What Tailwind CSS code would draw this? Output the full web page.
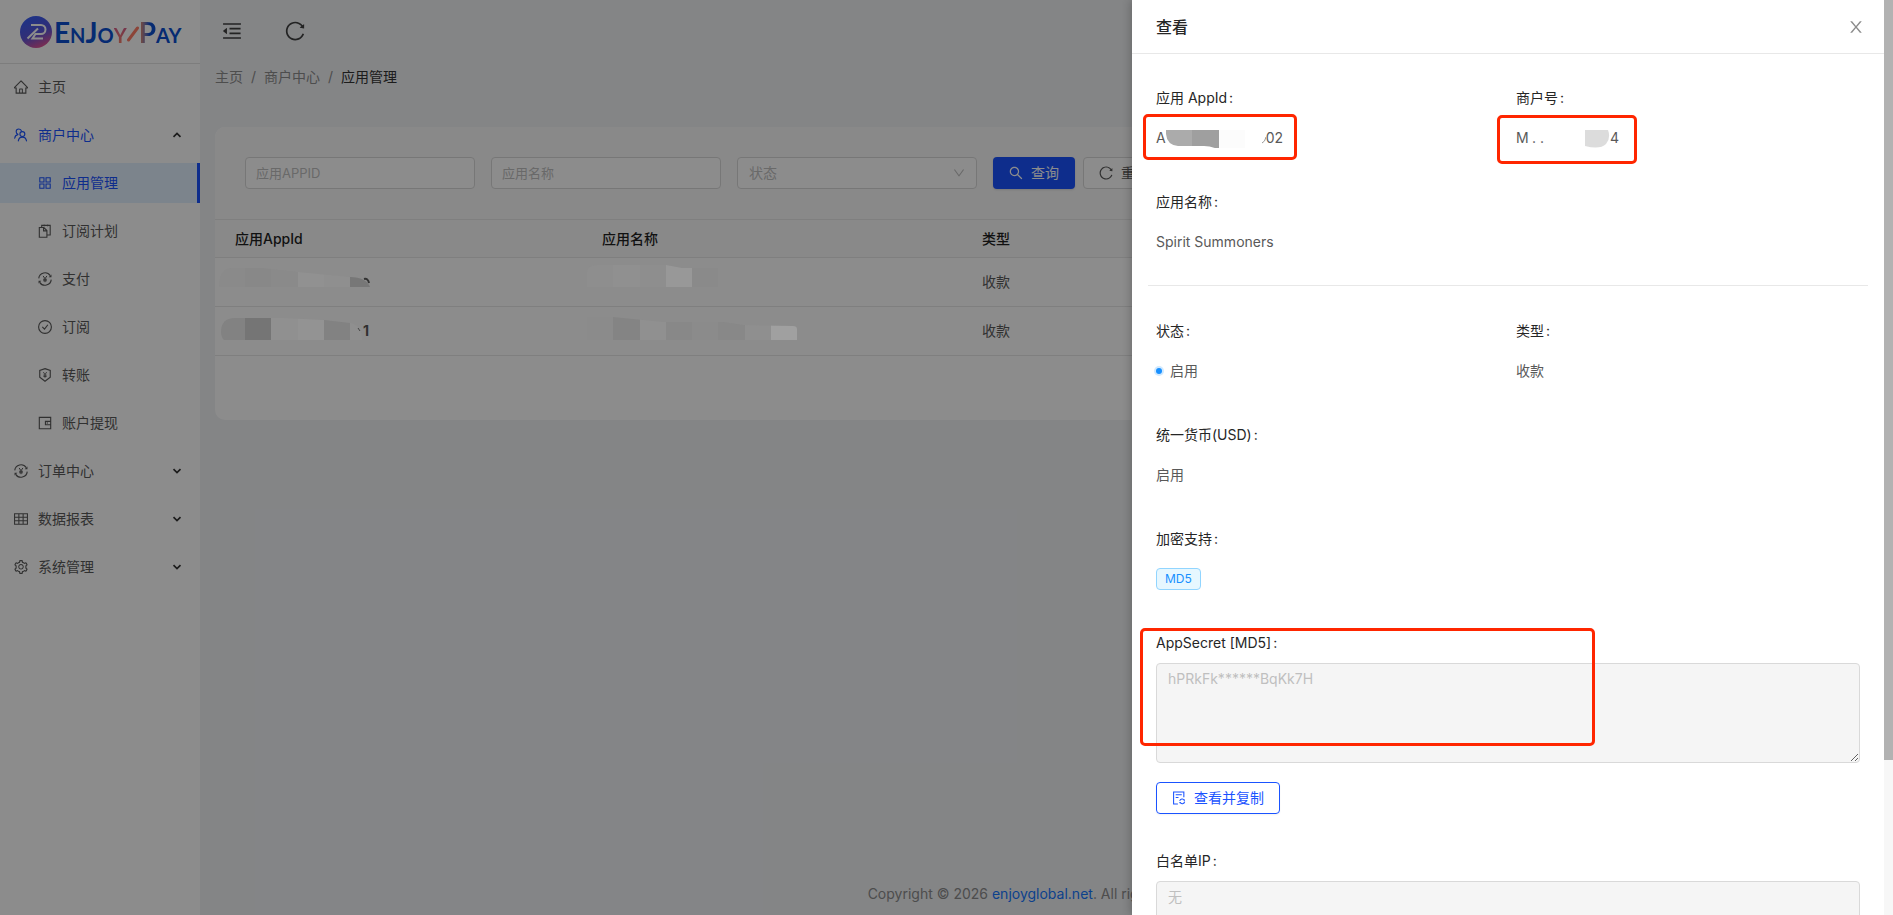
<!DOCTYPE html>
<html lang="zh-CN">
<head>
<meta charset="utf-8">
<title>应用管理</title>
<script src="https://cdn.jsdelivr.net/npm/@tailwindcss/browser@4"></script>
</head>
<body class="relative h-screen overflow-hidden bg-[#f0f2f5] font-['Inter','Noto_Sans_CJK_SC',sans-serif] text-sm text-[#595959]">

<svg class="hidden" aria-hidden="true">
  <symbol id="home" viewBox="64 64 896 896"><path d="M946.5 505L560.1 118.8l-25.9-25.9a31.5 31.5 0 00-44.4 0L77.5 505a63.9 63.9 0 00-18.8 46c.4 35.2 29.7 63.3 64.9 63.3h42.5V940h691.8V614.3h43.4c17.1 0 33.2-6.7 45.3-18.8a63.6 63.6 0 0018.7-45.3c0-17-6.7-33.1-18.8-45.2zM568 868H456V664h112v204zm217.9-325.7V868H632V640c0-22.1-17.9-40-40-40H432c-22.1 0-40 17.9-40 40v228H238.1V542.3h-96l370-369.7 23.1 23.1L882 542.3h-96.1z"/></symbol>
  <symbol id="team" viewBox="64 64 896 896"><g fill="none" stroke="currentColor" stroke-width="72" stroke-linecap="round"><circle cx="600" cy="455" r="158"/><path d="M340 890c20-150 120-245 260-245s240 95 265 245M545 270c-20-85-85-140-170-140-98 0-172 76-172 172 0 80 45 135 115 160M110 720c15-120 80-210 195-235M690 330"/></g></symbol>
  <symbol id="apps" viewBox="64 64 896 896"><path d="M464 144H160c-8.8 0-16 7.2-16 16v304c0 8.8 7.2 16 16 16h304c8.8 0 16-7.2 16-16V160c0-8.8-7.2-16-16-16zm-52 268H212V212h200v200zm452-268H560c-8.8 0-16 7.2-16 16v304c0 8.8 7.2 16 16 16h304c8.8 0 16-7.2 16-16V160c0-8.8-7.2-16-16-16zm-52 268H612V212h200v200zM464 544H160c-8.8 0-16 7.2-16 16v304c0 8.8 7.2 16 16 16h304c8.8 0 16-7.2 16-16V560c0-8.8-7.2-16-16-16zm-52 268H212V612h200v200zm452-268H560c-8.8 0-16 7.2-16 16v304c0 8.8 7.2 16 16 16h304c8.8 0 16-7.2 16-16V560c0-8.8-7.2-16-16-16zm-52 268H612V612h200v200z"/></symbol>
  <symbol id="snippets" viewBox="64 64 896 896"><g fill="none" stroke="currentColor" stroke-width="70"><path d="M148 290h290l196 196v430H148zM420 300v205h205M300 290V150h544v620H650M460 90v120M680 90v120"/></g></symbol>
  <symbol id="yen" viewBox="64 64 896 896"><g fill="none" stroke="currentColor" stroke-width="72"><path d="M112 470A402 402 0 0 1 850 298M912 554A402 402 0 0 1 174 726"/><path d="M390 315l122 180 122-180M512 490v225M395 530h234M395 625h234" stroke-width="64"/></g><path d="M925 225v180H745zM99 799V619h180z"/></symbol>
  <symbol id="check" viewBox="64 64 896 896"><g fill="none" stroke="currentColor" stroke-width="72"><circle cx="512" cy="512" r="410"/><path d="M340 500l140 150 215-280"/></g></symbol>
  <symbol id="shield" viewBox="64 64 896 896"><g fill="none" stroke="currentColor" stroke-width="72"><path d="M512 104l336 110v444L512 914 176 658V214z"/><path d="M405 325l107 155 107-155M512 480v210M410 520h204M410 605h204" stroke-width="56"/></g></symbol>
  <symbol id="wallet" viewBox="64 64 896 896"><g fill="none" stroke="currentColor" stroke-width="72"><path d="M148 148h728v728H148zM876 404H540v216h336"/></g><circle cx="655" cy="512" r="44"/></symbol>
  <symbol id="table" viewBox="64 64 896 896"><path fill="none" stroke="currentColor" stroke-width="68" d="M100 180h824v664H100zM100 400h824M100 622h824M375 180v664M648 180v664"/></symbol>
  <symbol id="gear" viewBox="64 64 896 896"><path d="M924.8 625.7l-65.5-56c3.1-19 4.7-38.4 4.7-57.8s-1.6-38.8-4.7-57.8l65.5-56a32.03 32.03 0 009.3-35.2l-.9-2.6a443.74 443.74 0 00-79.7-137.9l-1.8-2.1a32.12 32.12 0 00-35.1-9.5l-81.3 28.9c-30-24.6-63.5-44-99.7-57.6l-15.7-85a32.05 32.05 0 00-25.8-25.7l-2.7-.5c-52.1-9.4-106.9-9.4-159 0l-2.7.5a32.05 32.05 0 00-25.8 25.7l-15.8 85.4a351.86 351.86 0 00-99 57.4l-81.9-29.1a32 32 0 00-35.1 9.5l-1.8 2.1a446.02 446.02 0 00-79.7 137.9l-.9 2.6c-4.5 12.5-.8 26.5 9.3 35.2l66.3 56.6c-3.1 18.8-4.6 38-4.6 57.1 0 19.2 1.5 38.4 4.6 57.1L99 625.5a32.03 32.03 0 00-9.3 35.2l.9 2.6c18.1 50.4 44.9 96.9 79.7 137.9l1.8 2.1a32.12 32.12 0 0035.1 9.5l81.9-29.1c29.8 24.5 63.1 43.9 99 57.4l15.8 85.4a32.05 32.05 0 0025.8 25.7l2.7.5a449.4 449.4 0 00159 0l2.7-.5a32.05 32.05 0 0025.8-25.7l15.7-85a350 350 0 0099.7-57.6l81.3 28.9a32 32 0 0035.1-9.5l1.8-2.1c34.8-41.1 61.6-87.5 79.7-137.9l.9-2.6c4.5-12.3.8-26.3-9.3-35zM788.3 465.9c2.5 15.1 3.8 30.6 3.8 46.1s-1.3 31-3.8 46.1l-6.6 40.1 74.7 63.9a370.03 370.03 0 01-42.6 73.6L721 702.8l-31.4 25.8c-23.9 19.6-50.5 35-79.3 45.8l-38.1 14.3-17.9 97a377.5 377.5 0 01-85 0l-17.9-97.2-37.8-14.5c-28.5-10.8-55-26.2-78.7-45.7l-31.4-25.9-93.4 33.2c-17-22.9-31.2-47.6-42.6-73.6l75.5-64.5-6.5-40c-2.4-14.9-3.7-30.3-3.7-45.5 0-15.3 1.2-30.6 3.7-45.5l6.5-40-75.5-64.5c11.3-26.1 25.6-50.7 42.6-73.6l93.4 33.2 31.4-25.9c23.7-19.5 50.2-34.9 78.7-45.7l37.9-14.3 17.9-97.2c28.1-3.2 56.8-3.2 85 0l17.9 97 38.1 14.3c28.7 10.8 55.4 26.2 79.3 45.8l31.4 25.8 92.8-32.9c17 22.9 31.2 47.6 42.6 73.6L781.8 426l6.5 39.9zM512 326c-97.2 0-176 78.8-176 176s78.8 176 176 176 176-78.8 176-176-78.8-176-176-176zm79.2 255.2A111.6 111.6 0 01512 614c-29.9 0-58-11.7-79.2-32.8A111.6 111.6 0 01400 502c0-29.9 11.7-58 32.8-79.2C454 401.6 482.1 390 512 390c29.9 0 58 11.6 79.2 32.8A111.6 111.6 0 01624 502c0 29.9-11.7 58-32.8 79.2z"/></symbol>
  <symbol id="caret" viewBox="0 0 10 6"><path d="M1.5 1.2L5 4.6l3.5-3.4" fill="none" stroke="currentColor" stroke-width="1.7"/></symbol>
  <symbol id="fold" viewBox="64 64 896 896"><path d="M408 442h480c4.400 0 8-3.600 8-8v-56c0-4.400-3.600-8-8-8H408c-4.400 0-8 3.600-8 8v56c0 4.400 3.600 8 8 8zm-8 204c0 4.400 3.600 8 8 8h480c4.400 0 8-3.600 8-8v-56c0-4.400-3.600-8-8-8H408c-4.400 0-8 3.600-8 8v56zm504-486H120c-4.400 0-8 3.600-8 8v56c0 4.400 3.600 8 8 8h784c4.400 0 8-3.600 8-8v-56c0-4.400-3.600-8-8-8zm0 632H120c-4.400 0-8 3.600-8 8v56c0 4.400 3.600 8 8 8h784c4.400 0 8-3.600 8-8v-56c0-4.400-3.600-8-8-8zM115.400 518.900L271.700 642c5.800 4.600 14.400.5 14.400-6.900V388.900c0-7.400-8.500-11.500-14.400-6.900L115.400 505.100a8.740 8.740 0 000 13.800z"/></symbol>
  <symbol id="reload" viewBox="64 64 896 896"><path d="M909.1 209.3l-56.4 44.1C775.8 155.1 656.2 92 521.9 92 290 92 102.3 279.5 102 511.5 101.7 743.7 289.8 932 521.9 932c181.3 0 335.8-115 394.6-276.1 1.5-4.2-.7-8.9-4.9-10.3l-56.7-19.5a8 8 0 00-10.1 4.8c-1.800 5-3.800 10-5.900 14.900-17.300 41-42.100 77.800-73.700 109.400A344.770 344.770 0 01655.900 829c-42.300 17.900-87.400 27-133.800 27-46.500 0-91.500-9.100-133.800-27A341.500 341.500 0 01279 755.200a342.160 342.160 0 01-73.700-109.400c-17.900-42.400-27-87.400-27-133.900s9.100-91.500 27-133.900c17.300-41 42.100-77.800 73.700-109.400 31.600-31.600 68.400-56.400 109.300-73.800 42.300-17.900 87.400-27 133.800-27 46.500 0 91.500 9.100 133.800 27a341.500 341.500 0 01109.300 73.800c9.900 9.900 19.200 20.400 27.800 31.400l-60.200 47a8 8 0 003 14.100l175.600 43c5 1.200 9.900-2.600 9.900-7.700l.8-180.900c-.1-6.600-7.800-10.300-13-6.200z"/></symbol>
  <symbol id="search" viewBox="64 64 896 896"><path d="M909.6 854.5L649.9 594.8C690.2 542.7 712 479 712 412c0-80.2-31.3-155.4-87.9-212.1-56.6-56.7-132-87.9-212.1-87.9s-155.5 31.3-212.1 87.9C143.200 256.500 112 331.800 112 412c0 80.100 31.300 155.500 87.900 212.100C256.500 680.800 331.800 712 412 712c67 0 130.600-21.800 182.700-62l259.700 259.600a8.200 8.200 0 0011.600 0l43.600-43.500a8.200 8.200 0 000-11.600zM570.400 570.400C528 612.700 471.800 636 412 636s-116-23.300-158.400-65.600C211.300 528 188 471.800 188 412s23.300-116.100 65.600-158.400C296 211.300 352.200 188 412 188s116.100 23.200 158.400 65.600S636 352.200 636 412s-23.300 116.100-65.600 158.400z"/></symbol>
  <symbol id="down" viewBox="64 64 896 896"><path d="M884 256h-75c-5.100 0-9.900 2.500-12.900 6.600L512 654.200 227.900 262.600c-3-4.100-7.800-6.600-12.900-6.600h-75c-6.500 0-10.300 7.400-6.500 12.700l352.600 486.100c12.800 17.600 39 17.600 51.700 0l352.600-486.100c3.900-5.300.1-12.700-6.400-12.700z"/></symbol>
  <symbol id="close" viewBox="64 64 896 896"><path d="M563.800 512l262.500-312.900c4.400-5.200.7-13.100-6.100-13.100h-79.800c-4.700 0-9.200 2.100-12.300 5.700L511.600 449.800 295.100 191.700c-3-3.600-7.500-5.700-12.300-5.700H203c-6.800 0-10.500 7.900-6.100 13.100L459.400 512 196.900 824.900A7.950 7.950 0 00203 838h79.800c4.700 0 9.200-2.100 12.300-5.700l216.500-258.100 216.500 258.100c3 3.600 7.500 5.700 12.300 5.700h79.800c6.800 0 10.500-7.900 6.100-13.100L563.800 512z"/></symbol>
  <symbol id="filesync" viewBox="64 64 896 896"><g fill="none" stroke="currentColor" stroke-width="68"><path d="M440 896H166V128h656v340M300 306h390M300 476h180"/><path d="M558 700a160 160 0 0 1 300-40M876 740a160 160 0 0 1-300 50"/></g><path d="M890 590v100H790zM540 870V770h100z"/></symbol>
</svg>

<div class="flex h-full">
  <aside class="w-[200px] shrink-0 bg-white">
    <a href="#" class="flex h-16 items-center border-b border-[#e4e4e4] pl-5">
      <svg class="size-8 shrink-0" viewBox="0 0 32 32" aria-hidden="true">
        <defs><linearGradient id="lg" x1="0.3" y1="0" x2="0.7" y2="1"><stop offset="0" stop-color="#365cf5"/><stop offset="0.55" stop-color="#5a55d8"/><stop offset="1" stop-color="#ea5290"/></linearGradient></defs>
        <circle cx="16" cy="16" r="16" fill="url(#lg)"/>
        <path d="M11 9h10a4.500 4.500 0 0 1 0 9H15.500l-3 4.500H23M18 12.500L7.500 22.500" fill="none" stroke="#fff" stroke-width="2"/>
      </svg>
      <span class="ml-0.5 flex items-center font-['Lato'] text-[28px] leading-8 font-bold text-[#0b4fd0] [font-variant-caps:small-caps]"><span>EnJo</span><span class="bg-linear-to-b from-[#c0409a] to-[#ff8a5c] bg-clip-text text-transparent">y</span><svg class="h-5 w-3" viewBox="0 0 12 20" aria-hidden="true"><path d="M1.500 18L10.500 6" fill="none" stroke="#ff7d66" stroke-width="3" stroke-linecap="round"/></svg><span class="bg-linear-to-r from-[#ff8a4c] to-[#0b4fd0] to-60% bg-clip-text text-transparent">P</span><span>ay</span></span>
    </a>
    <nav class="flex flex-col gap-2 pt-[3px]">
      <a href="#" class="flex h-10 items-center gap-2.5 px-3.5"><svg class="size-3.5" fill="currentColor"><use href="#home"/></svg>主页</a>
      <button class="flex h-10 items-center gap-2.5 px-3.5 text-[#1a53ff]"><svg class="size-3.5" fill="currentColor"><use href="#team"/></svg>商户中心<svg class="mr-1 ml-auto h-1.5 w-2.5 rotate-180 text-[#333333]"><use href="#caret"/></svg></button>
      <a href="#" class="flex h-10 items-center gap-2.5 border-r-3 border-[#1a53ff] bg-[#e2f0ff] pl-[38px] text-[#1a53ff]"><svg class="size-3.5" fill="currentColor"><use href="#apps"/></svg>应用管理</a>
      <a href="#" class="flex h-10 items-center gap-2.5 pl-[38px]"><svg class="size-3.5" fill="currentColor"><use href="#snippets"/></svg>订阅计划</a>
      <a href="#" class="flex h-10 items-center gap-2.5 pl-[38px]"><svg class="size-3.5" fill="currentColor"><use href="#yen"/></svg>支付</a>
      <a href="#" class="flex h-10 items-center gap-2.5 pl-[38px]"><svg class="size-3.5" fill="currentColor"><use href="#check"/></svg>订阅</a>
      <a href="#" class="flex h-10 items-center gap-2.5 pl-[38px]"><svg class="size-3.5" fill="currentColor"><use href="#shield"/></svg>转账</a>
      <a href="#" class="flex h-10 items-center gap-2.5 pl-[38px]"><svg class="size-3.5" fill="currentColor"><use href="#wallet"/></svg>账户提现</a>
      <button class="flex h-10 items-center gap-2.5 px-3.5"><svg class="size-3.5" fill="currentColor"><use href="#yen"/></svg>订单中心<svg class="mr-1 ml-auto h-1.5 w-2.5 text-[#333333]"><use href="#caret"/></svg></button>
      <button class="flex h-10 items-center gap-2.5 px-3.5"><svg class="size-3.5" fill="currentColor"><use href="#table"/></svg>数据报表<svg class="mr-1 ml-auto h-1.5 w-2.5 text-[#333333]"><use href="#caret"/></svg></button>
      <button class="flex h-10 items-center gap-2.5 px-3.5"><svg class="size-3.5" fill="currentColor"><use href="#gear"/></svg>系统管理<svg class="mr-1 ml-auto h-1.5 w-2.5 text-[#333333]"><use href="#caret"/></svg></button>
    </nav>
  </aside>

  <div class="flex min-w-0 flex-1 flex-col px-[15px]">
    <header class="flex h-[62px] items-center gap-[43px] pl-[7px] text-[#404040]">
      <button aria-label="收起菜单"><svg class="size-5" fill="currentColor"><use href="#fold"/></svg></button>
      <button aria-label="刷新"><svg class="size-5" fill="currentColor"><use href="#reload"/></svg></button>
    </header>
    <nav class="flex h-[30px] items-center gap-2 text-[#8c8c8c]">
      <a href="#">主页</a><span>/</span><a href="#">商户中心</a><span>/</span><span class="text-[#333333]">应用管理</span>
    </nav>
    <main class="mt-[35px] overflow-hidden rounded-[10px] bg-white pb-16">
      <form class="flex bg-[#fafafa] px-[30px] py-[30px]">
        <input aria-label="应用APPID" placeholder="应用APPID" class="h-8 w-[230px] rounded-[4px] border border-[#d9d9d9] bg-white px-2.5 text-[13px] placeholder:text-[#bfbfbf]">
        <input aria-label="应用名称" placeholder="应用名称" class="ml-4 h-8 w-[230px] rounded-[4px] border border-[#d9d9d9] bg-white px-2.5 text-[13px] placeholder:text-[#bfbfbf]">
        <div class="relative ml-4 w-60">
          <select aria-label="状态" class="h-8 w-full appearance-none rounded-[4px] border border-[#d9d9d9] bg-white px-[11px] text-[#bfbfbf]"><option>状态</option></select>
          <svg class="pointer-events-none absolute top-2.5 right-3 size-3 text-[#bfbfbf]" fill="currentColor"><use href="#down"/></svg>
        </div>
        <button type="button" class="ml-4 flex h-8 items-center gap-2 rounded-[4px] bg-[#1a53ff] px-4 text-white shadow-sm"><svg class="size-3.5" fill="currentColor"><use href="#search"/></svg>查询</button>
        <button type="button" class="ml-2 flex h-8 items-center gap-2 rounded-[4px] border border-[#d9d9d9] bg-white px-[15px]"><svg class="size-3.5" fill="currentColor"><use href="#reload"/></svg>重置</button>
      </form>
      <table class="w-full table-fixed border-y border-[#e8e8e8] text-left">
        <colgroup><col class="w-[367px]"><col class="w-[380px]"><col></colgroup>
        <thead class="bg-[#fafafa] text-[#1f1f1f]">
          <tr class="h-[38px] border-b border-[#e8e8e8]"><th class="px-5 font-medium">应用AppId</th><th class="px-5 font-medium">应用名称</th><th class="px-5 font-medium">类型</th></tr>
        </thead>
        <tbody>
          <tr class="h-[49px] border-b border-[#e8e8e8]"><td></td><td></td><td class="px-5">收款</td></tr>
          <tr class="h-[49px]"><td class="pl-[148px] font-bold">1</td><td></td><td class="px-5">收款</td></tr>
        </tbody>
      </table>
    </main>
    <footer class="mt-auto flex justify-center pb-[10px] leading-[22px] text-[#8c8c8c]"><p>Copyright © 2026 <a href="#" class="text-[#1677ff]">enjoyglobal.net</a>. All rights reserved.</p></footer>
  </div>
</div>

<div class="absolute inset-0 bg-black/45"></div>

<!-- Pixelated redaction of the table cells -->
<svg class="absolute top-[260px] left-[215px] h-[85px] w-[590px]" viewBox="215 260 590 85" aria-hidden="true">
  <defs>
    <clipPath id="m1"><path d="M219 287q0-19 13-19h30l36 4 52 5q16 0 20 10z"/></clipPath>
    <clipPath id="m2"><path d="M224 340q-3-3-3-8 0-14 14-14h49l40 2 26 3q12 2 12 17z"/></clipPath>
    <clipPath id="m3"><path d="M587 287v-14q0-8 10-8h69l16 3h36v19z"/></clipPath>
    <clipPath id="m4"><path d="M587 340v-23h26l30 3 20 2h60l20 3 50 1q4 0 4 3v11z"/></clipPath>
  </defs>
  <g clip-path="url(#m1)"><path fill="#8a8a8a" d="M219 265h26v22h-26zM271 265h27v22h-27z"/><path fill="#888888" d="M245 265h26v22h-26z"/><path fill="#919191" d="M298 265h26v22h-26z"/><path fill="#8f8f8f" d="M324 265h26v22h-26z"/><path fill="#777777" d="M350 265h20v22h-20z"/></g>
  <path d="M364 279q4-1 5 4" fill="none" stroke="#333333" stroke-width="2"/>
  <g clip-path="url(#m2)"><path fill="#828282" d="M221 315h24v25h-24zM324 315h26v25h-26z"/><path fill="#757575" d="M245 315h26v25h-26z"/><path fill="#909090" d="M271 315h27v25h-27z"/><path fill="#939393" d="M298 315h26v25h-26z"/><path fill="#8f8f8f" d="M350 315h12v25h-12z"/></g>
  <path d="M358 328l2 3" stroke="#444444" stroke-width="1"/>
  <g clip-path="url(#m3)"><path fill="#8e8e8e" d="M587 265h26v22h-26zM640 265h26v22h-26z"/><path fill="#909090" d="M613 265h27v22h-27z"/><path fill="#989898" d="M666 265h26v22h-26z"/><path fill="#8a8a8a" d="M692 265h26v22h-26z"/></g>
  <g clip-path="url(#m4)"><path fill="#8b8b8b" d="M587 315h26v25h-26zM692 315h26v25h-26z"/><path fill="#848484" d="M613 315h27v25h-27z"/><path fill="#909090" d="M640 315h26v25h-26z"/><path fill="#888888" d="M666 315h26v25h-26zM718 315h27v25h-27z"/><path fill="#8f8f8f" d="M745 315h26v25h-26z"/><path fill="#a0a0a0" d="M771 315h26v25h-26z"/></g>
</svg>

<section role="dialog" aria-label="查看" class="absolute inset-y-0 right-0 flex w-[761px] bg-white shadow-[-2px_0_8px_rgba(0,0,0,0.2)]">
  <div class="min-w-0 flex-1 overflow-hidden">
    <header class="flex h-[54px] items-center justify-between border-b border-[#e8e8e8] px-6">
      <h2 class="text-base font-medium text-[#262626]">查看</h2>
      <button aria-label="关闭" class="-mr-1 text-[#8c8c8c]"><svg class="size-4" fill="currentColor"><use href="#close"/></svg></button>
    </header>
    <div class="px-4 pt-6">
      <dl class="grid grid-cols-2 gap-y-6 leading-10">
        <div class="h-20 px-2"><dt class="text-[#262626]">应用 AppId<span class="ml-0.5">:</span></dt>
          <dd class="flex items-center"><span>A</span>
            <svg class="h-5 w-[100px]" viewBox="0 0 100 20" aria-hidden="true"><path d="M0 2h26v16H12Q1 17 0 6z" fill="#ababab"/><path d="M26 2h27v20Q46 18 38 18H26z" fill="#9f9f9f"/><path d="M53 2h26v18H53z" fill="#fcfcfc"/><path d="M96 15q3-1 4-6" stroke="#999999" fill="none"/></svg><span>02</span></dd></div>
        <div class="h-20 px-2"><dt class="text-[#262626]">商户号<span class="ml-0.5">:</span></dt>
          <dd class="flex items-center"><span class="w-4">M</span><span class="w-[42px]">. .</span>
            <svg class="h-5 w-9" viewBox="0 0 36 20" aria-hidden="true"><path d="M11 2h23q3 8-2 14-6 6-21 2z" fill="#dcdcdc"/></svg><span>4</span></dd></div>
        <div class="h-20 px-2"><dt class="text-[#262626]">应用名称<span class="ml-0.5">:</span></dt><dd>Spirit Summoners</dd></div>
      </dl>
      <hr class="mt-[23px] mb-[25px] border-[#e8e8e8]">
      <dl class="grid grid-cols-2 gap-y-6 leading-10">
        <div class="h-20 px-2"><dt class="text-[#262626]">状态<span class="ml-0.5">:</span></dt>
          <dd class="flex items-center gap-2"><span class="size-1.5 rounded-full bg-[#1890ff] ring-2 ring-[#d0e9ff]"></span>启用</dd></div>
        <div class="h-20 px-2"><dt class="text-[#262626]">类型<span class="ml-0.5">:</span></dt><dd>收款</dd></div>
        <div class="col-span-2 h-20 px-2"><dt class="text-[#262626]">统一货币(USD)<span class="ml-0.5">:</span></dt><dd>启用</dd></div>
        <div class="col-span-2 h-20 px-2"><dt class="text-[#262626]">加密支持<span class="ml-0.5">:</span></dt>
          <dd class="flex h-10 items-center"><span class="rounded-[4px] border border-[#91d5ff] bg-[#e6f7ff] px-2 text-xs leading-5 text-[#1890ff]">MD5</span></dd></div>
      </dl>
      <div class="mt-6 flex flex-col items-start px-2">
        <label for="secret" class="leading-10 text-[#262626]">AppSecret [MD5]<span class="ml-0.5">:</span></label>
        <textarea id="secret" disabled class="h-[100px] w-full resize-y rounded-[4px] border border-[#d9d9d9] bg-[#f5f5f5] px-[11px] py-1 leading-[22px] text-[#bfbfbf]">hPRkFk******BqKk7H</textarea>
        <button type="button" class="mt-[19px] flex h-8 items-center gap-2 rounded-[4px] border border-[#1a53ff] px-[15px] text-[#1a53ff] shadow-xs"><svg class="size-3.5" fill="currentColor"><use href="#filesync"/></svg>查看并复制</button>
        <label for="iplist" class="mt-[27px] leading-10 text-[#262626]">白名单IP<span class="ml-0.5">:</span></label>
        <textarea id="iplist" disabled class="h-[100px] w-full resize-y rounded-[4px] border border-[#d9d9d9] bg-[#f5f5f5] px-[11px] py-1 leading-[22px] text-[#bfbfbf]">无</textarea>
      </div>
    </div>
  </div>
  <div class="w-[9px] bg-[#f7f7f7]"><div class="h-[760px] bg-[#b2b2b2]"></div></div>

  <!-- Highlight frames around the sensitive fields -->
  <div class="pointer-events-none absolute top-[114px] left-[11px] h-[46px] w-[154px] rounded-[5px] border-3 border-[#ff2600]"></div>
  <div class="pointer-events-none absolute top-[115px] left-[365px] h-[49px] w-[140px] rounded-[5px] border-3 border-[#ff2600]"></div>
  <div class="pointer-events-none absolute top-[628px] left-[8px] h-[118px] w-[455px] rounded-[5px] border-3 border-[#ff2600]"></div>
</section>
</body>
</html>
